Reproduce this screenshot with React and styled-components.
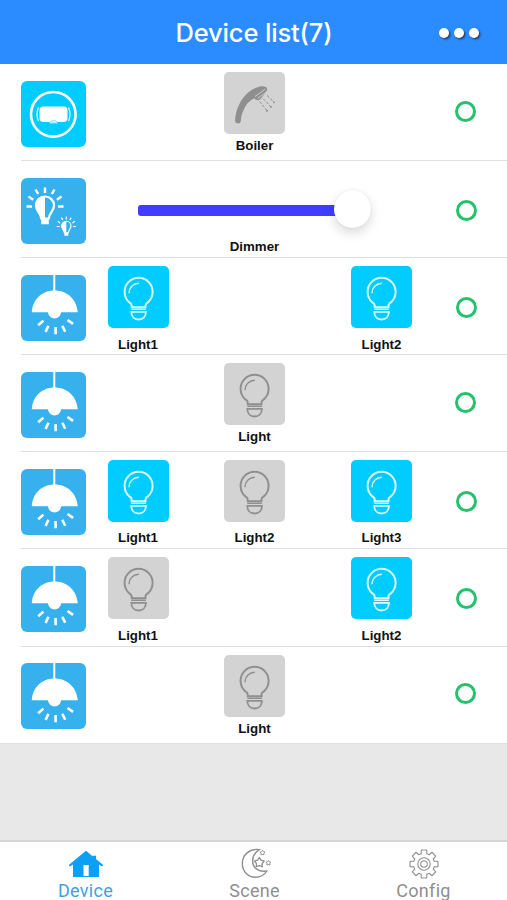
import React from "react";
import styled, { createGlobalStyle } from "styled-components";

const rows = [
  { icon: "boiler", items: [{ name: "Boiler", col: 3, icon: "shower" }], gap: 4 },
  { icon: "dimmer", dimmer: "Dimmer" },
  {
    icon: "lamp",
    items: [
      { name: "Light1", col: 2, on: true },
      { name: "Light2", col: 4, on: true },
    ],
    gap: 9,
  },
  { icon: "lamp", items: [{ name: "Light", col: 3 }], gap: 4 },
  {
    icon: "lamp",
    items: [
      { name: "Light1", col: 2, on: true },
      { name: "Light2", col: 3 },
      { name: "Light3", col: 4, on: true },
    ],
    gap: 8,
  },
  {
    icon: "lamp",
    items: [
      { name: "Light1", col: 2 },
      { name: "Light2", col: 4, on: true },
    ],
    gap: 9,
  },
  { icon: "lamp", items: [{ name: "Light", col: 3 }], gap: 4 },
];

const BoilerIcon = () => (
  <svg width="65" height="66" viewBox="0 0 65 66" fill="none" stroke="#fff">
    <circle cx="32.3" cy="33.3" r="22.3" strokeWidth="2.6" />
    <rect x="18.5" y="25.5" width="28" height="15.6" rx="4" fill="#fff" stroke="none" />
    <path d="M17.5 26.5q-3 6.8 0 13.6M47.5 26.5q3 6.8 0 13.6" strokeWidth="1.4" opacity=".8" />
    <path d="M29 40.9l1.200-1h4.600l1.200 1" stroke="#00ccff" strokeWidth=".6" />
    <path d="M28.5 41.800h8" strokeWidth="1" />
  </svg>
);

const DimmerBulb = ({ transform }) => (
  <g transform={transform} fill="none" stroke="#fff" strokeWidth="2.2">
    <path d="M0-10A9 9 0 0 0-9-1c0 5.5 4.5 7 5.200 13h7.600C4.500 6 9 4.500 9-1A9 9 0 0 0 0-10z" />
    <path d="M0-10a9 9 0 0 0-9 9c0 5.5 4.5 7 5.5 13H0z" fill="#fff" stroke="none" />
    <path d="M-3.800 12h7.600v5.800h-7.600z" fill="#fff" stroke="none" />
    <path
      d="M0-13.500v-5.5M-6.800-12.5l-2.700-4.500M6.800-12.5l2.700-4.500M-11.800-6.800l-4.700-3.200M11.800-6.800l4.700-3.200M-13 0h-5.500M13 0h5.5"
      strokeWidth="2.4"
    />
  </g>
);

const DimmerIcon = () => (
  <svg width="65" height="66" viewBox="0 0 65 66">
    <DimmerBulb transform="translate(24 28.5)" />
    <DimmerBulb transform="translate(45.3 48.5) scale(.52)" />
  </svg>
);

const LampIcon = () => (
  <svg width="65" height="66" viewBox="0 0 65 66" fill="#fff">
    <path d="M32.300 0h2v17h-2z" />
    <path d="M10.800 37.300C11.800 24 21 15.500 33.600 15.500S55.600 24 56.800 37.300H40.200a6.800 7.700 0 0 1-13.300 0z" />
    <path
      d="M17.200 50.200l5.200-4.600M24.600 57l2.800-6.300M34.600 52v7.300M41.300 50.800l2.900 6M46.500 45l5.600 3.800"
      stroke="#fff"
      strokeWidth="2.6"
    />
  </svg>
);

const BulbIcon = () => (
  <svg width="61" height="62" viewBox="0 0 61 62" fill="none" stroke="currentColor" strokeWidth="2">
    <path d="M23.700 41.200v-1.800c0-1.500-1-2.200-2.300-3A14 14 0 1 1 39.800 36.400c-1.300.8-2.300 1.500-2.300 3v1.800z" />
    <path d="M21 27.200c0-5.600 4-9.700 9.900-9.900" strokeWidth="1.4" />
    <path d="M23.300 43.300h14.600" strokeWidth="1.4" />
    <path d="M23.300 45.800h14.600c0 4.600-3 7.700-7.300 7.700s-7.300-3.100-7.300-7.700z" strokeWidth="1.8" />
  </svg>
);

const ShowerIcon = () => (
  <svg width="61" height="62" viewBox="0 0 61 62" fill="currentColor">
    <path d="M11 48.800C11.600 41 13.500 34.500 18 27.500c4.500-6.800 11-11.500 19-13.200 2.800-.5 5.300.3 6 2 .4 2-.5 3.500-1.800 5L36 27.500c-2.500 1.500-4.500.7-5.500-1.200-4 1.400-7.200 4.700-9.400 8.700-2.600 4.500-4.100 9-4.400 14.500l-1 1.800h-3.500z" />
    <path d="M31 24.500l10.500-7.500M33.500 26.500l9.500-7" stroke="#d3d3d3" strokeWidth=".9" />
    <path
      d="M43 23.500l7 6.500M39 26.500l8 8.500M35.500 29.500l7.500 9"
      stroke="currentColor"
      strokeWidth="1"
      strokeDasharray="3 1.5"
      fill="none"
    />
    <circle cx="50" cy="30.3" r=".9" />
    <circle cx="47" cy="35" r=".9" />
    <circle cx="43" cy="38.7" r="1" />
  </svg>
);

const HomeIcon = () => (
  <svg width="36" height="28" viewBox="0 0 36 28" fill="#0b9ff5">
    <path
      fillRule="evenodd"
      d="M18 0.800L0.800 15l1 1.400L5 14.600V27h26V14.600l3.200 1.800 1-1.400-7.200-6V5.800h-3.200v.8zM15.500 15h5.200v11h-5.200z"
    />
  </svg>
);

const starPath = (cx, cy, r) => {
  const pts = [];
  for (let i = 0; i < 10; i++) {
    const a = -Math.PI / 2 + (i * Math.PI) / 5;
    const d = i % 2 ? r * 0.6 : r;
    pts.push(`${cx + d * Math.cos(a)} ${cy + d * Math.sin(a)}`);
  }
  return `M${pts.join("L")}z`;
};

const SceneIcon = () => (
  <svg width="32" height="31" viewBox="0 0 32 31" fill="none" stroke="#8f8f8f" strokeWidth="1.4">
    <path d="M19.300 1.600C9.500.2 2.200 7 2.300 15.800c.1 8 6 13.500 13 13.500 5 0 9.300-2.600 11.500-6.300-8.300 1.500-14-3.200-14.200-9.500C12.500 8 15 4.200 19.300 1.600z" />
    <path d={starPath(19.3, 14.6, 5)} strokeWidth="1.3" />
    <path d={starPath(22.5, 4.8, 2.5)} strokeWidth="1" />
    <path d={starPath(28.4, 15, 2.5)} strokeWidth="1" />
  </svg>
);

const gearPath = () => {
  const pts = [];
  for (let i = 0; i < 8; i++) {
    [
      [-0.27, 10.6],
      [-0.19, 14.2],
      [0.19, 14.2],
      [0.27, 10.6],
    ].forEach(([da, r]) => {
      const a = (i * Math.PI) / 4 + da;
      pts.push(`${15 + r * Math.sin(a)} ${15 - r * Math.cos(a)}`);
    });
  }
  return `M${pts.join("L")}z`;
};

const GearIcon = () => (
  <svg width="30" height="30" viewBox="0 0 30 30" fill="none" stroke="#8f8f8f" strokeWidth="1.1">
    <path d={gearPath()} strokeLinejoin="round" />
    <circle cx="15" cy="15" r="6.2" />
    <circle cx="15" cy="15" r="3.3" />
  </svg>
);

const deviceIcons = {
  boiler: <BoilerIcon />,
  dimmer: <DimmerIcon />,
  lamp: <LampIcon />,
};

const App = () => {
  return (
    <Page>
      <GlobalStyle />
      <Header>
        <span />
        <Title>Device list(7)</Title>
        <Menu>
          <Dot />
          <Dot />
          <Dot />
        </Menu>
      </Header>
      <List>
        {rows.map((row, index) => (
          <Row key={index}>
            <DeviceIcon $bright={row.icon === "boiler"}>{deviceIcons[row.icon]}</DeviceIcon>
            {row.dimmer && (
              <Dimmer>
                <Slider>
                  <Track />
                  <Thumb />
                </Slider>
                <Label>{row.dimmer}</Label>
              </Dimmer>
            )}
            {row.items?.map((item) => (
              <Channel key={item.name} $col={item.col} $gap={row.gap}>
                <Tile $on={item.on}>{item.icon === "shower" ? <ShowerIcon /> : <BulbIcon />}</Tile>
                <Label>{item.name}</Label>
              </Channel>
            ))}
            <Status $single={row.items?.length === 1} />
          </Row>
        ))}
      </List>
      <TabBar>
        <Tab $active>
          <TabIcon>
            <HomeIcon />
          </TabIcon>
          <TabText>Device</TabText>
        </Tab>
        <Tab>
          <TabIcon $shift={3}>
            <SceneIcon />
          </TabIcon>
          <TabText>Scene</TabText>
        </Tab>
        <Tab>
          <TabIcon $shift={1}>
            <GearIcon />
          </TabIcon>
          <TabText>Config</TabText>
        </Tab>
      </TabBar>
    </Page>
  );
};

export default App;

const GlobalStyle = createGlobalStyle`
  * {
    box-sizing: border-box;
  }

  body {
    margin: 0;
    overflow: hidden;
  }

  svg {
    display: block;
  }
`;

const Page = styled.div`
  display: flex;
  flex-direction: column;
  width: 507px;
  height: 900px;
  overflow: hidden;
  background-color: #e8e8e8;
  font-family: "Liberation Sans", Arial, sans-serif;
`;

const Header = styled.header`
  flex: none;
  display: grid;
  grid-template-columns: 80px 1fr 80px;
  align-items: center;
  height: 64px;
  padding-top: 1px;
  background-color: #2a8cff;
`;

const Title = styled.h1`
  margin: 0 0 0 1px;
  color: #fff;
  font-family: Inter, sans-serif;
  font-size: 25.5px;
  font-weight: 500;
  line-height: 33px;
  letter-spacing: -0.15px;
  text-align: center;
  white-space: nowrap;
`;

const Menu = styled.div`
  display: flex;
  gap: 5px;
  padding-left: 12px;
`;

const Dot = styled.span`
  width: 10px;
  height: 10px;
  border-radius: 50%;
  background-color: #fff;
  box-shadow: 1.5px 1.5px 2px #2c3f60;
`;

const List = styled.div`
  flex: none;
  background-color: #fff;
`;

const Row = styled.div`
  display: grid;
  grid-template-columns: 65px 104px 129px 125px 43px;
  align-items: start;
  height: 97.1px;
  margin-left: 21px;
  border-bottom: 1px solid #dedede;

  &:last-child {
    margin-left: 0;
    padding-left: 21px;
  }
`;

const DeviceIcon = styled.div`
  width: 65px;
  height: 66px;
  margin-top: 16.5px;
  border-radius: 6px;
  overflow: hidden;
  background-color: ${(props) => (props.$bright ? "#00ccff" : "#37b1ed")};
`;

const Channel = styled.div`
  grid-column: ${(props) => props.$col};
  grid-row: 1;
  display: flex;
  flex-direction: column;
  align-items: center;
  gap: ${(props) => props.$gap}px;
  padding-top: 8px;
`;

const Tile = styled.div`
  width: 61px;
  height: 62px;
  border-radius: 5px;
  color: ${(props) => (props.$on ? "#dcfaff" : "#8f8f8f")};
  background-color: ${(props) => (props.$on ? "#00ccff" : "#d3d3d3")};
`;

const Label = styled.div`
  color: #111;
  font-size: 13.3px;
  font-weight: 700;
  line-height: 16px;
  text-align: center;
`;

const Dimmer = styled.div`
  grid-column: 2 / 5;
  grid-row: 1;
  padding: 29px 73px 0 52px;
`;

const Slider = styled.div`
  display: flex;
  align-items: center;
  height: 38px;
  margin-bottom: 11px;
`;

const Track = styled.div`
  width: 200px;
  height: 11px;
  margin-top: 2px;
  border-radius: 3px 0 0 3px;
  background-color: #403dff;
`;

const Thumb = styled.div`
  flex: none;
  width: 37px;
  height: 38px;
  margin-left: -4px;
  border-radius: 50%;
  background-color: #fff;
  box-shadow: 0 5px 12px rgba(0, 0, 0, 0.15), 0 0 2px rgba(0, 0, 0, 0.1);
`;

const Status = styled.div`
  grid-column: 5;
  grid-row: 1;
  width: 21px;
  height: 21px;
  margin: ${(props) => (props.$single ? "36.5px 0 0 10.5px" : "38.5px 0 0 11.5px")};
  border: 3.5px solid #25c16f;
  border-radius: 50%;
`;

const TabBar = styled.nav`
  flex: none;
  display: grid;
  grid-template-columns: repeat(3, 169px);
  height: 60px;
  margin-top: auto;
  padding-left: 1px;
  border-top: 2px solid #d6d6d6;
  background-color: #fff;
`;

const Tab = styled.div`
  display: flex;
  flex-direction: column;
  align-items: center;
  color: ${(props) => (props.$active ? "#3f9fdf" : "#8f8f8f")};
`;

const TabIcon = styled.div`
  display: flex;
  align-items: center;
  height: 31px;
  margin-top: 6px;
  padding-left: ${(props) => props.$shift || 0}px;
`;

const TabText = styled.span`
  margin-top: 3px;
  font-family: Roboto, sans-serif;
  font-size: 18px;
  line-height: 18px;
  letter-spacing: 0.3px;
  white-space: nowrap;
`;
